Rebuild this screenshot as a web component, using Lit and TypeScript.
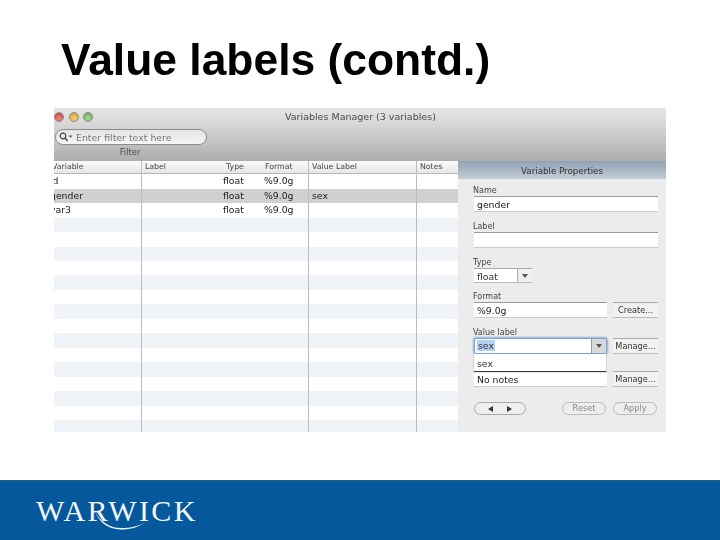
import { LitElement, html, css } from "lit";
import { customElement } from "lit/decorators.js";

const rows = [
  ["id", "", "float", "%9.0g", "", ""],
  ["gender", "", "float", "%9.0g", "sex", ""],
  ["var3", "", "float", "%9.0g", "", ""],
];

@customElement("app-root")
export class AppRoot extends LitElement {
  static styles = css`
    :host { display: block; width: 720px; height: 540px; background: #fff; overflow: hidden; font-family: "Liberation Sans", Arial, sans-serif; }
    .slide { width: 720px; height: 540px; display: flex; flex-direction: column; }
    h1 { margin: 0; height: 108px; box-sizing: border-box; padding: 34px 0 0 61px; font-size: 44.4px; line-height: 52px; font-weight: 700; color: #000; flex: none; filter: grayscale(1); }
    .shot { margin-left: 54px; width: 612px; height: 324px; flex: none; background: #fff; display: flex; flex-direction: column; overflow: hidden; filter: blur(0.4px); font-family: "DejaVu Sans", sans-serif; color: #333; }
    .spacer { flex: 1; }
    .footer { height: 60px; flex: none; background: #06589c; box-shadow: inset 0 1px 0 #1e5a8a; display: flex; align-items: center; padding-left: 36px; }
    .logo { position: relative; width: 162px; height: 44px; margin-top: 2px; }
    .word { font-family: "Liberation Serif", serif; font-size: 30px; line-height: 44px; letter-spacing: 2.4px; color: #f2f7fb; white-space: nowrap; }
    .swoosh { position: absolute; left: 59px; top: 23px; }

    .titlebar { height: 53px; flex: none; background: linear-gradient(#e6e6e6 0, #d4d4d4 35%, #adadad 100%); display: flex; flex-direction: column; position: relative; }
    .top { height: 21px; box-sizing: border-box; padding-bottom: 4px; display: flex; align-items: center; flex: none; }
    .lights { display: flex; gap: 4.5px; width: 231px; flex: none; }
    .light { width: 10px; height: 10px; box-sizing: border-box; border-radius: 50%; border: 1px solid #8a8a8a; }
    .red { background: radial-gradient(circle at 50% 70%, #f08a80, #c8383a); }
    .yellow { background: radial-gradient(circle at 50% 70%, #f4d070, #d29a2c); }
    .green { background: radial-gradient(circle at 50% 70%, #a8dc90, #62a658); }
    .wintitle { font-size: 9.5px; color: #4a4a4a; white-space: nowrap; }
    .search { margin-left: 1px; width: 152px; height: 16px; box-sizing: border-box; border-radius: 8px; background: linear-gradient(#e4e4e4, #f6f6f6); border: 1px solid #8f8f8f; display: flex; align-items: center; padding-left: 3px; font-size: 9.4px; color: #777; flex: none; white-space: nowrap; }
    .search svg { margin-right: 3px; flex: none; }
    .filter { width: 152px; text-align: center; font-size: 8.4px; color: #4d4d4d; margin-top: 2px; }

    .main { flex: 1; display: flex; min-height: 0; }
    .table { width: 404px; flex: none; display: flex; flex-direction: column; position: relative; }
    .tr { display: grid; grid-template-columns: 87px 81px 41px 45px 108px 42px; flex: none; font-size: 9.3px; }
    .head { height: 13px; background: linear-gradient(#fbfbfb, #e6e6e6); border-bottom: 1px solid #b8b8b8; box-sizing: border-box; font-size: 7.8px; color: #444; line-height: 12px; }
    .body { flex: 1; background: repeating-linear-gradient(#fff 0, #fff 14.5px, #f0f4f9 14.5px, #f0f4f9 29px); }
    .row { height: 14.5px; line-height: 14.5px; color: #222; }
    .row.sel { background: #d0d0d0; }
    .cell { overflow: hidden; white-space: nowrap; padding-left: 4px; }
    .cell.clip { padding-left: 0; text-indent: -4px; }
    .head .cell.clip { text-indent: -2px; }
    .cell.plain { padding-left: 1px; }
    .head .cell.fmt { padding-left: 2px; }
    .lines { position: absolute; inset: 0; display: flex; pointer-events: none; }
    .lines div { border-right: 1px solid #bcbcbc; box-sizing: border-box; flex: none; }

    .props { width: 208px; flex: none; background: #ececec; display: flex; flex-direction: column; font-size: 9px; color: #333; position: relative; }
    .phead { height: 18px; flex: none; background: linear-gradient(#8fa2b5, #c4cdd6); text-align: center; font-size: 8.7px; line-height: 20px; color: #2e2e2e; }
    .form { display: flex; flex-direction: column; padding: 5px 8px 0 16px; }
    .lab { height: 12px; line-height: 14px; font-size: 8px; color: #444; white-space: nowrap; margin-left: -1px; }
    .inp { height: 16px; box-sizing: border-box; background: #fff; border-top: 1px solid #999; border-bottom: 1px solid #ccc; line-height: 16px; padding-left: 3px; font-size: 9.3px; color: #222; white-space: nowrap; }
    .g8 { height: 8px; }
    .g7 { height: 7px; }
    .g5 { height: 5px; }
    .line { display: flex; gap: 6px; }
    .line .inp { width: 133px; flex: none; }
    .side { flex: 1; height: 16px; box-sizing: border-box; border-top: 1px solid #aaa; border-bottom: 1px solid #bbb; background: #f2f2f2; text-align: center; line-height: 14px; font-size: 8.2px; color: #333; white-space: nowrap; }
    .select { width: 58px; display: flex; box-sizing: border-box; height: 15px; background: #fff; border-top: 1px solid #aaa; border-bottom: 1px solid #bbb; line-height: 16px; font-size: 9.3px; }
    .select .v { flex: 1; padding-left: 3px; }
    .caret { width: 14px; flex: none; border-left: 1px solid #aaa; background: #f0f0f0; display: flex; align-items: center; justify-content: center; }
    .tri { width: 0; height: 0; border-left: 3px solid transparent; border-right: 3px solid transparent; border-top: 4px solid #555; }
    .combo { width: 133px; flex: none; height: 16px; box-sizing: border-box; display: flex; background: #fff; border: 1px solid #7da3d0; box-shadow: 0 0 2px 1px #8fb4e0; border-radius: 2px; font-size: 9.3px; line-height: 14px; }
    .combo .v { flex: 1; padding-left: 2px; }
    .hl { background: #b5d0f2; padding: 0 1px; }
    .combo .caret { background: #d8d8d8; border-left: 1px solid #9a9a9a; }
    .menu { position: absolute; left: 16px; top: 193px; width: 132px; height: 17px; background: #fff; box-shadow: 0 1px 1px rgba(0,0,0,.6); font-size: 9.3px; line-height: 19px; padding-left: 3px; box-sizing: border-box; z-index: 2; }
    .btns { display: flex; align-items: center; margin-top: 15px; padding-right: 1px; }
    .nav { width: 52px; height: 13px; box-sizing: border-box; border: 1px solid #aaa; border-radius: 7px; background: #efefef; display: flex; align-items: center; justify-content: center; gap: 14px; }
    .l { width: 0; height: 0; border-top: 3.5px solid transparent; border-bottom: 3.5px solid transparent; border-right: 5px solid #333; }
    .r { width: 0; height: 0; border-top: 3.5px solid transparent; border-bottom: 3.5px solid transparent; border-left: 5px solid #333; }
    .pill { height: 13px; box-sizing: border-box; border: 1px solid #bbb; border-radius: 7px; background: #eee; color: #888; font-size: 8.2px; line-height: 11px; width: 44px; text-align: center; }
    .pill.first { margin-left: auto; margin-right: 7px; }
  `;

  render() {
    return html`<div class="slide">
      <h1>Value labels (contd.)</h1>
      <div class="shot">
        <div class="titlebar">
          <div class="top">
            <div class="lights">
              <span class="light red"></span><span class="light yellow"></span><span class="light green"></span>
            </div>
            <span class="wintitle">Variables Manager (3 variables)</span>
          </div>
          <div class="search">
            <svg width="14" height="10" viewBox="0 0 14 10"><circle cx="4" cy="4" r="2.8" fill="none" stroke="#444" stroke-width="1.2"/><path d="M6 6l2.6 3" stroke="#444" stroke-width="1.4"/><path d="M9.5 3.5h4l-2 2.2z" fill="#555"/></svg>
            <span>Enter filter text here</span>
          </div>
          <div class="filter">Filter</div>
        </div>
        <div class="main">
          <div class="table">
            <div class="tr head">
              ${["Variable", "Label", "Type", "Format", "Value Label", "Notes"].map((h, i) => html`<div class="cell ${i === 0 ? "clip" : i === 3 ? "fmt" : ""}">${h}</div>`)}
            </div>
            <div class="body">
              ${rows.map((r, i) => html`<div class="tr row ${i === 1 ? "sel" : ""}">
                ${r.map((c, j) => html`<div class="cell ${j === 0 ? "clip" : j === 2 || j === 3 ? "plain" : ""}">${c}</div>`)}
              </div>`)}
            </div>
            <div class="lines">
              ${[88, 167, 108].map((w) => html`<div style="width:${w}px"></div>`)}
            </div>
          </div>
          <div class="props">
            <div class="phead">Variable Properties</div>
            <div class="form">
              <div class="lab">Name</div>
              <div class="inp">gender</div>
              <div class="g8"></div>
              <div class="lab">Label</div>
              <div class="inp"></div>
              <div class="g8"></div>
              <div class="lab">Type</div>
              <div class="select"><div class="v">float</div><div class="caret"><span class="tri"></span></div></div>
              <div class="g7"></div>
              <div class="lab">Format</div>
              <div class="line"><div class="inp">%9.0g</div><div class="side">Create...</div></div>
              <div class="g8"></div>
              <div class="lab">Value label</div>
              <div class="line"><div class="combo"><div class="v"><span class="hl">sex</span></div><div class="caret"><span class="tri"></span></div></div><div class="side">Manage...</div></div>
              <div class="g5"></div>
              <div class="lab"></div>
              <div class="line"><div class="inp">No notes</div><div class="side">Manage...</div></div>
              <div class="btns">
                <div class="nav"><span class="l"></span><span class="r"></span></div>
                <div class="pill first">Reset</div>
                <div class="pill">Apply</div>
              </div>
            </div>
            <div class="menu">sex</div>
          </div>
        </div>
      </div>
      <div class="spacer"></div>
      <div class="footer">
        <div class="logo">
          <span class="word">WARWICK</span>
          <svg class="swoosh" width="52" height="18" viewBox="0 0 52 18"><path d="M0 0C5 8 13 16 26 16C36 16 44 14 50 10C44 15 36 17.5 26 17.5C12 17.5 4 9 0 0z" fill="#f2f7fb"/></svg>
        </div>
      </div>
    </div>`;
  }
}
